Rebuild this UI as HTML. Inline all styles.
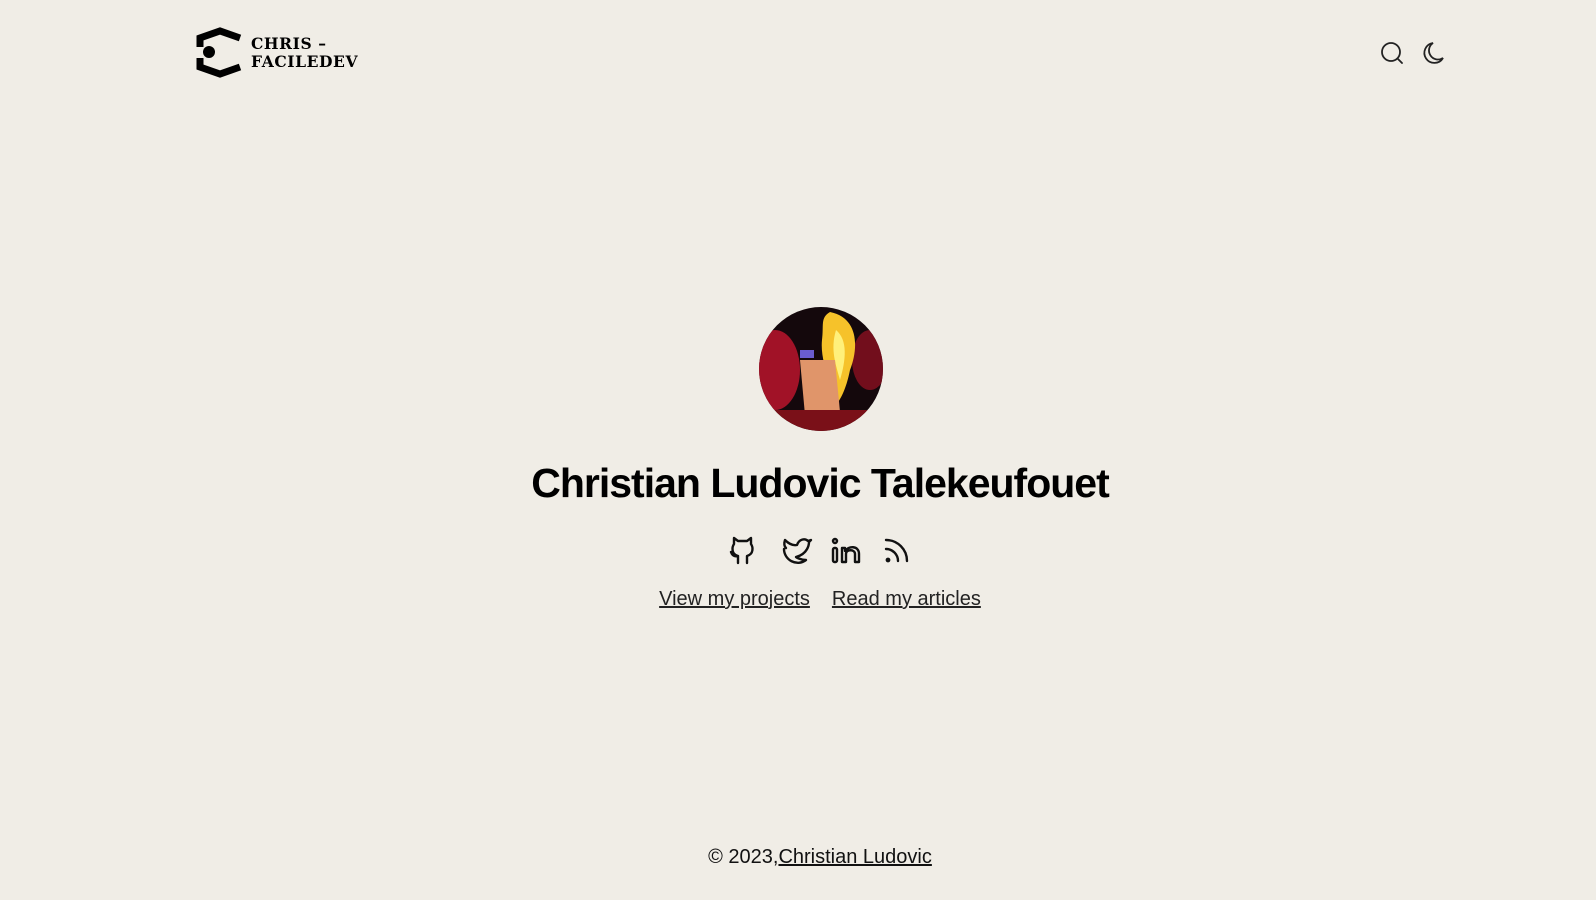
<!DOCTYPE html>
<html><head><meta charset="utf-8"><style>
html,body{margin:0;padding:0;width:1596px;height:900px;background:#f0ede6;overflow:hidden;font-family:"Liberation Sans",sans-serif;color:#000}
.abs{position:absolute}
.logo-t{left:251px;top:35px;font-family:"DejaVu Serif","Liberation Serif",serif;font-weight:bold;font-size:16px;line-height:18px;letter-spacing:0.6px;transform:scaleX(0.97);transform-origin:left top}
h1{position:absolute;left:22px;width:1596px;text-align:center;top:460px;margin:0;font-size:41px;letter-spacing:-1px;font-weight:bold}
.links{position:absolute;top:588px;left:22px;width:1596px;text-align:center;font-size:20px;word-spacing:0}
.links a{color:#222;text-decoration:underline;margin:0 11px}
.foot{position:absolute;top:846px;left:22px;width:1596px;text-align:center;font-size:20px;color:#111}
.foot a{color:#111;text-decoration:underline}
</style></head><body>
<svg class="abs" style="left:0;top:0" width="1596" height="900">
<path d="M200,47 V38 L220,31 L240,38" fill="none" stroke="#000" stroke-width="7" stroke-linejoin="miter"/>
<path d="M200,58 V67 L220,74 L240,67" fill="none" stroke="#000" stroke-width="7"/>
<circle cx="209" cy="52" r="6"/>
<g fill="none" stroke="#222" stroke-width="1.8" stroke-linecap="round">
<circle cx="1391" cy="52" r="9"/><path d="M1398,59 L1402,63"/>
<path d="M1433,43 A10,10 0 1 0 1443,58 A8,8 0 0 1 1433,43 Z"/>
</g>
<defs><clipPath id="c"><circle cx="821" cy="369" r="62"/></clipPath></defs>
<g clip-path="url(#c)">
<rect x="755" y="305" width="130" height="130" fill="#14080c"/>
<ellipse cx="775" cy="370" rx="25" ry="40" fill="#b0142a" opacity="0.9"/>
<ellipse cx="870" cy="360" rx="18" ry="30" fill="#8a1020" opacity="0.8"/>
<path d="M830,312 C860,318 858,350 850,370 C846,390 840,400 836,405 C830,380 820,360 822,340 C824,325 820,318 830,312Z" fill="#f6c22a"/>
<path d="M836,330 C848,340 846,360 840,380 C836,365 830,350 836,330Z" fill="#fff07a"/>
<path d="M800,360 L835,360 L840,412 L805,415Z" fill="#e0956a"/>
<rect x="800" y="350" width="14" height="8" fill="#6a5cd0"/>
<rect x="770" y="410" width="110" height="30" fill="#7a1018"/>
</g>
<g fill="none" stroke="#111" stroke-width="2.4" stroke-linecap="round" stroke-linejoin="round" transform="translate(0,-12)">
<path d="M738,575 V568 C734,569 732,567 731,564 M738,568 C731,566 732,559 734,556 V550 L738,553 H747 L751,550 V556 C753,559 754,566 747,568 V575"/>
<g transform="translate(0,6)">
<path d="M784,555 C784,566 797,573 806,566 C800,566 796,563 796,563 C808,560 809,550 809,548 L811,546 L808,547 C805,544 799,545 797,551 C792,552 788,549 785,546 C784,549 784,552 786,554"/>
</g>
<rect x="833" y="560" width="4" height="14" rx="1.5"/>
<circle cx="835" cy="553" r="2"/>
<path d="M842,574 V560 H845 V563 C848,558 859,557 859,566 V574 H855 V566 C855,561 846,561 846,566 V574 Z"/>
<circle cx="888" cy="572" r="1.2" fill="#111"/>
<path d="M886,561 A12,12 0 0 1 898,573 M886,552 A21,21 0 0 1 907,573"/>
</g>
</svg>
<div class="abs logo-t">CHRIS –<br>FACILEDEV</div>
<h1>Christian Ludovic Talekeufouet</h1>
<div class="links"><a>View my projects</a><a>Read my articles</a></div>
<div class="foot">© 2023,<a>Christian Ludovic</a></div>
</body></html>
